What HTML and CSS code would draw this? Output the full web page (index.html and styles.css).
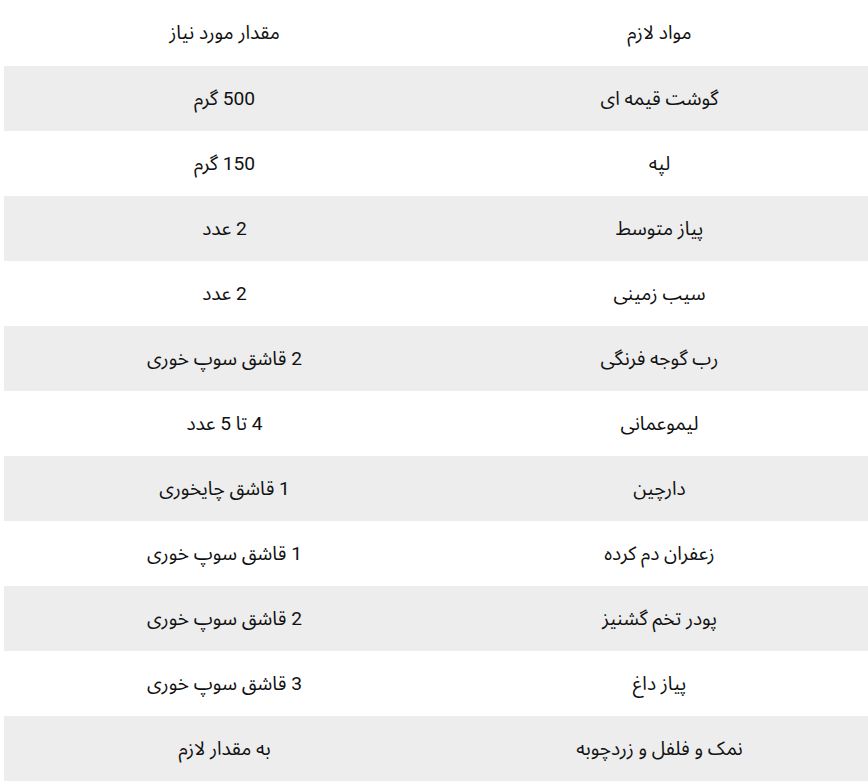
FILE: index.html
```html
<!DOCTYPE html>
<html lang="fa" dir="rtl">
<head>
<meta charset="utf-8">
<link rel="stylesheet" href="styles.css">
</head>
<body>
<table class="recipe">
  <thead>
    <tr><th>مواد لازم</th><th>مقدار مورد نیاز</th></tr>
  </thead>
  <tbody>
    <tr><td>گوشت قیمه ای</td><td>500 گرم</td></tr>
    <tr><td>لپه</td><td>150 گرم</td></tr>
    <tr><td>پیاز متوسط</td><td>2 عدد</td></tr>
    <tr><td>سیب زمینی</td><td>2 عدد</td></tr>
    <tr><td>رب گوجه فرنگی</td><td>2 قاشق سوپ خوری</td></tr>
    <tr><td>لیموعمانی</td><td>4 تا 5 عدد</td></tr>
    <tr><td>دارچین</td><td>1 قاشق چایخوری</td></tr>
    <tr><td>زعفران دم کرده</td><td>1 قاشق سوپ خوری</td></tr>
    <tr><td>پودر تخم گشنیز</td><td>2 قاشق سوپ خوری</td></tr>
    <tr><td>پیاز داغ</td><td>3 قاشق سوپ خوری</td></tr>
    <tr><td>نمک و فلفل و زردچوبه</td><td>به مقدار لازم</td></tr>
  </tbody>
</table>
</body>
</html>
```
FILE: styles.css
```css
html, body {
  margin: 0;
  overflow: hidden;
  background: #fff;
}
body {
  padding: 0;
  font-family: Roboto, "Noto Sans Arabic", "Noto Naskh Arabic", "DejaVu Sans", sans-serif;
  font-size: 19.2px;
  color: #111;
}
.recipe {
  border-collapse: collapse;
  width: 870px;
  margin-right: -6px;
  margin-left: 4px;
}
.recipe th,
.recipe td {
  height: 65px;
  padding: 0 0 0 6px;
  width: 50%;
  text-align: center;
  vertical-align: middle;
  font-weight: normal;
  line-height: 1;
}
.recipe thead th {
  height: 66px;
}
.recipe tbody tr:nth-child(odd) {
  background: #ededed;
}
```
